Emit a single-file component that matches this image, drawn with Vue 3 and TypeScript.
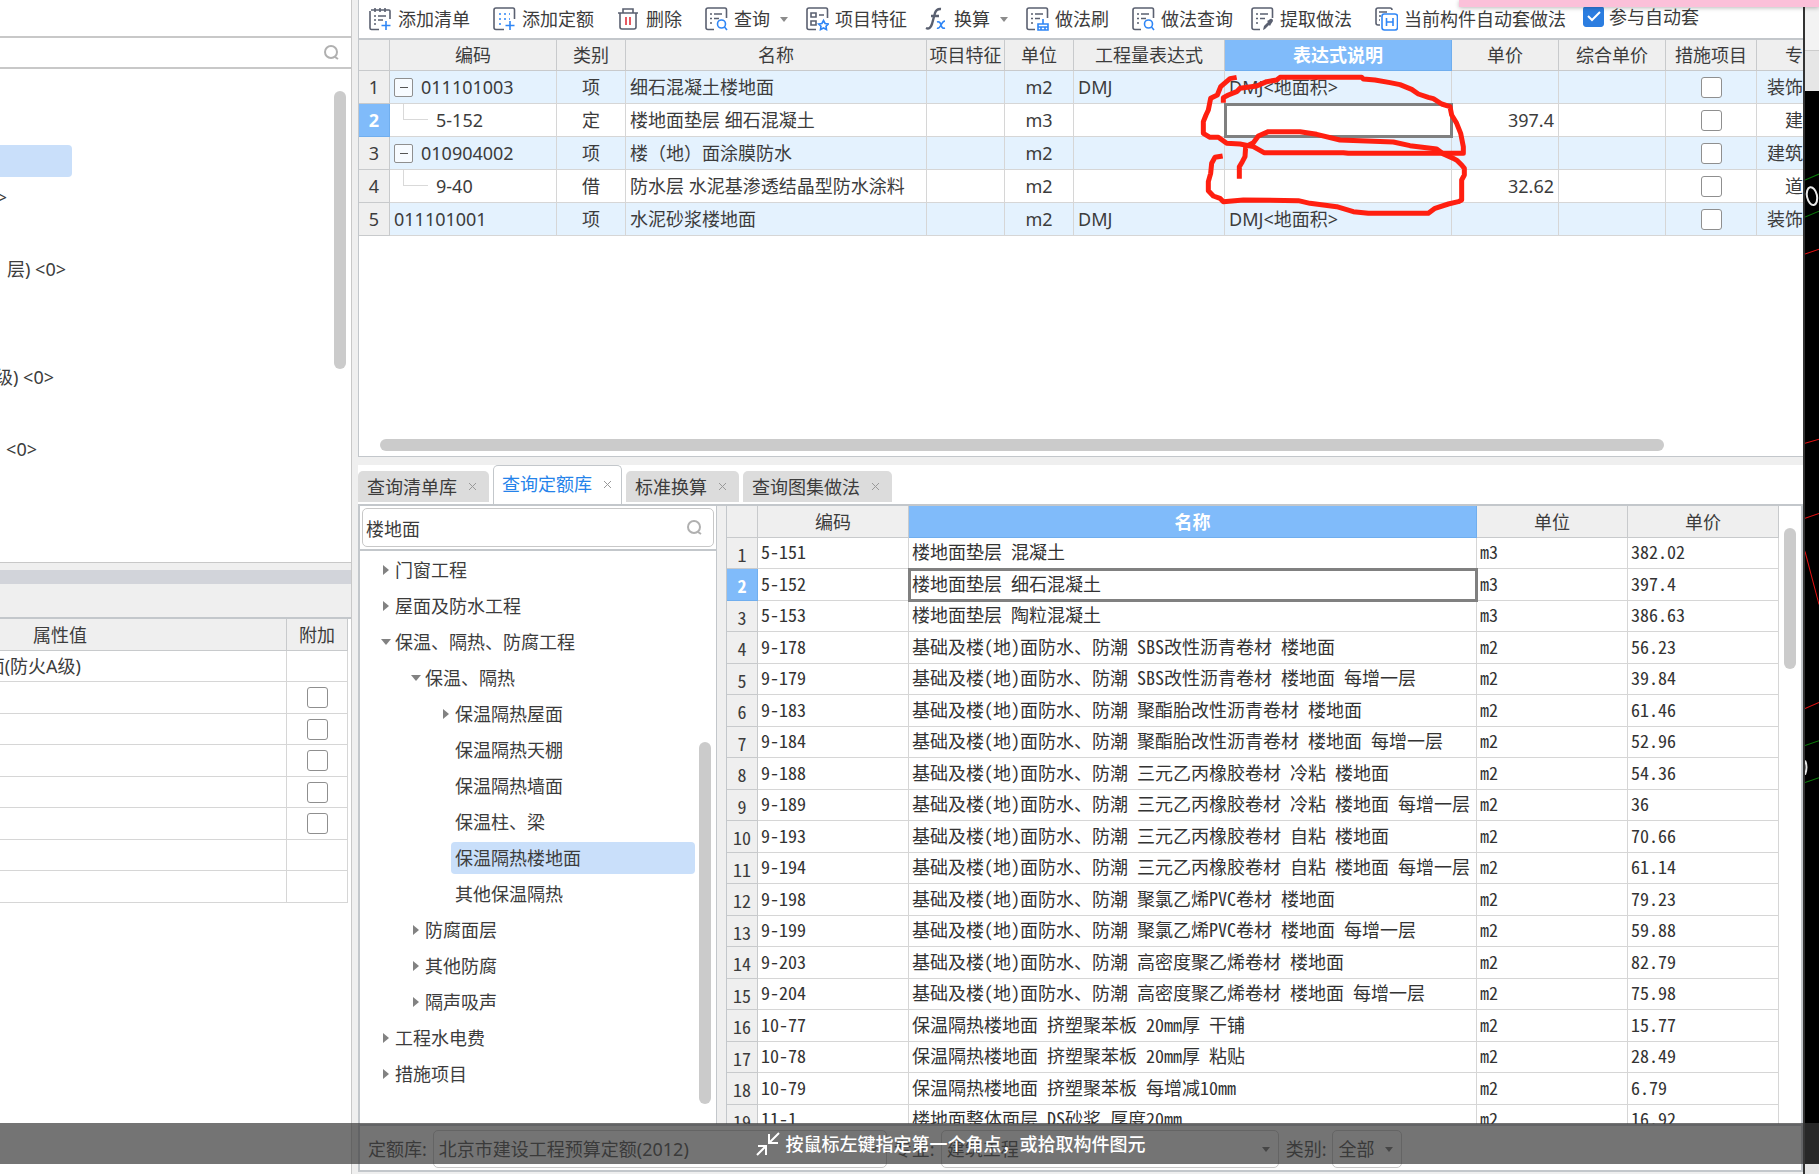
<script setup lang="ts">
import { ref } from 'vue'

interface Tool { id: string; label: string; menu?: boolean; tight?: boolean }
interface Item { code: string; kind: string; name: string; unit: string; expr: string; note: string; price: string; major: string; level: 'parent' | 'child' | 'flat' }
interface TreeNode { label: string; level: number; state: 'open' | 'closed' | 'leaf' }

const tools: Tool[] = [
  { id: 'list', label: '添加清单' },
  { id: 'quota', label: '添加定额' },
  { id: 'trash', label: '删除' },
  { id: 'query', label: '查询', menu: true, tight: true },
  { id: 'feature', label: '项目特征', tight: true },
  { id: 'fx', label: '换算', menu: true, tight: true },
  { id: 'brush', label: '做法刷' },
  { id: 'search', label: '做法查询', tight: true },
  { id: 'pick', label: '提取做法' },
  { id: 'auto', label: '当前构件自动套做法', tight: true },
]
const autoApply = ref(true)

const items: Item[] = [
  { code: '011101003', kind: '项', name: '细石混凝土楼地面', unit: 'm2', expr: 'DMJ', note: 'DMJ<地面积>', price: '', major: '装饰', level: 'parent' },
  { code: '5-152', kind: '定', name: '楼地面垫层 细石混凝土', unit: 'm3', expr: '', note: '', price: '397.4', major: '建', level: 'child' },
  { code: '010904002', kind: '项', name: '楼（地）面涂膜防水', unit: 'm2', expr: '', note: '', price: '', major: '建筑', level: 'parent' },
  { code: '9-40', kind: '借', name: '防水层 水泥基渗透结晶型防水涂料', unit: 'm2', expr: '', note: '', price: '32.62', major: '道', level: 'child' },
  { code: '011101001', kind: '项', name: '水泥砂浆楼地面', unit: 'm2', expr: 'DMJ', note: 'DMJ<地面积>', price: '', major: '装饰', level: 'flat' },
]

const tabs = ['查询清单库', '查询定额库', '标准换算', '查询图集做法']
const activeTab = ref(1)
const keyword = ref('楼地面')

const tree: TreeNode[] = [
  { label: '门窗工程', level: 0, state: 'closed' },
  { label: '屋面及防水工程', level: 0, state: 'closed' },
  { label: '保温、隔热、防腐工程', level: 0, state: 'open' },
  { label: '保温、隔热', level: 1, state: 'open' },
  { label: '保温隔热屋面', level: 2, state: 'closed' },
  { label: '保温隔热天棚', level: 2, state: 'leaf' },
  { label: '保温隔热墙面', level: 2, state: 'leaf' },
  { label: '保温柱、梁', level: 2, state: 'leaf' },
  { label: '保温隔热楼地面', level: 2, state: 'leaf' },
  { label: '其他保温隔热', level: 2, state: 'leaf' },
  { label: '防腐面层', level: 1, state: 'closed' },
  { label: '其他防腐', level: 1, state: 'closed' },
  { label: '隔声吸声', level: 1, state: 'closed' },
  { label: '工程水电费', level: 0, state: 'closed' },
  { label: '措施项目', level: 0, state: 'closed' },
]
const activeNode = ref(8)

const base = '基础及楼(地)面防水、防潮 '
const quotas: string[][] = [
  ['5-151', '楼地面垫层 混凝土', 'm3', '382.02'],
  ['5-152', '楼地面垫层 细石混凝土', 'm3', '397.4'],
  ['5-153', '楼地面垫层 陶粒混凝土', 'm3', '386.63'],
  ['9-178', base + 'SBS改性沥青卷材 楼地面', 'm2', '56.23'],
  ['9-179', base + 'SBS改性沥青卷材 楼地面 每增一层', 'm2', '39.84'],
  ['9-183', base + '聚酯胎改性沥青卷材 楼地面', 'm2', '61.46'],
  ['9-184', base + '聚酯胎改性沥青卷材 楼地面 每增一层', 'm2', '52.96'],
  ['9-188', base + '三元乙丙橡胶卷材 冷粘 楼地面', 'm2', '54.36'],
  ['9-189', base + '三元乙丙橡胶卷材 冷粘 楼地面 每增一层', 'm2', '36'],
  ['9-193', base + '三元乙丙橡胶卷材 自粘 楼地面', 'm2', '70.66'],
  ['9-194', base + '三元乙丙橡胶卷材 自粘 楼地面 每增一层', 'm2', '61.14'],
  ['9-198', base + '聚氯乙烯PVC卷材 楼地面', 'm2', '79.23'],
  ['9-199', base + '聚氯乙烯PVC卷材 楼地面 每增一层', 'm2', '59.88'],
  ['9-203', base + '高密度聚乙烯卷材 楼地面', 'm2', '82.79'],
  ['9-204', base + '高密度聚乙烯卷材 楼地面 每增一层', 'm2', '75.98'],
  ['10-77', '保温隔热楼地面 挤塑聚苯板 20mm厚 干铺', 'm2', '15.77'],
  ['10-78', '保温隔热楼地面 挤塑聚苯板 20mm厚 粘贴', 'm2', '28.49'],
  ['10-79', '保温隔热楼地面 挤塑聚苯板 每增减10mm', 'm2', '6.79'],
  ['11-1', '楼地面整体面层 DS砂浆 厚度20mm', 'm2', '16.92'],
]

const components = [
  { text: '', end: 72 },
  { text: '0>', end: 7 },
  { text: '', end: 0 },
  { text: '层) <0>', end: 66 },
  { text: '', end: 0 },
  { text: '', end: 0 },
  { text: '级) <0>', end: 54 },
  { text: '', end: 0 },
  { text: '<0>', end: 37 },
]
const props = ['text', 'box', 'box', 'box', 'box', 'box', 'none', 'none']
</script>

<template>
  <div class="app">
    <aside class="left">
      <div class="left-top"></div>
      <label class="left-search">
        <input type="text" aria-label="搜索构件" />
        <svg class="glass" viewBox="0 0 18 18"><circle cx="8" cy="8" r="6" /><path d="M12 13l3 2" /></svg>
      </label>
      <div class="left-list">
        <ul>
          <li v-for="(c, i) in components" :key="i" :class="{ on: i === 0 }">
            <span class="cut" :style="{ width: c.end + 'px' }">{{ c.text }}</span>
          </li>
        </ul>
        <i class="thumb"></i>
      </div>
      <div class="bar"></div>
      <div class="subbar"></div>
      <div class="props">
        <table>
          <colgroup><col /><col class="p-add" /></colgroup>
          <thead><tr><th class="p-val">属性值</th><th>附加</th></tr></thead>
          <tbody>
            <tr v-for="(p, i) in props" :key="i">
              <td><span v-if="p === 'text'" class="cut p-cut">面(防火A级)</span></td>
              <td class="mid"><input v-if="p === 'box'" type="checkbox" aria-label="附加" /></td>
            </tr>
          </tbody>
        </table>
      </div>
    </aside>

    <main>
      <section class="upper">
        <nav class="tools">
          <button v-for="t in tools" :key="t.id" type="button" :class="{ tight: t.tight }">
            <svg class="ico" viewBox="0 0 24 24">
              <g v-if="t.id === 'list'">
                <path d="M3 3h18q1 0 1 1v8M2 4v17q0 1.500 1.500 1.500H11M7 1v4M12 1v4M17 1v4M6 9h2M10 9h8M6 13h2M10 13h5M6 17h2" /><path class="b" d="M18 14v9M13.500 18.500h9" />
              </g>
              <g v-else-if="t.id === 'quota'">
                <path d="M12 22.500H4q-2 0-2-2V3q0-2 2-2h17q1.500 0 1.500 2v9" /><path class="b dots" d="M7 7h11M7 12h11M7 17h5" /><path class="b" d="M18 14v9M13.500 18.500h9" />
              </g>
              <g v-else-if="t.id === 'trash'">
                <path d="M2 6h20M7 6V2h10v4M4 6v14q0 2 2 2h12q2 0 2-2V6" /><path class="r" d="M10 10v8M14 10v8" />
              </g>
              <g v-else-if="t.id === 'feature'">
                <path d="M11 22.500H4q-2 0-2-2V3q0-2 2-2h17q1.500 0 1.500 2v8M6 6h5v4H6zM14 8h5M6 14h5v4H6z" /><path class="b" d="M18.500 13.500l1.600 3 3.200.5-2.300 2.200.5 3.300-3-1.500-3 1.500.5-3.300-2.300-2.200 3.200-.5z" />
              </g>
              <g v-else-if="t.id === 'fx'">
                <path class="f" d="M2 21q4 2 6-4l3-11q1.500-4.500 6-4M7 9h8" /><path class="b" d="M13 15q3-1 4 3t4 3M21 14q-2 0-4 4t-4 3" />
              </g>
              <g v-else-if="t.id === 'auto'">
                <path d="M6 18H4q-2 0-2-2V3q0-2 2-2h12q2 0 2 2M5 5h8M5 9h2M5 13h1" /><path class="b" d="M10 7h11q2.500 0 2.500 2.500v11q0 2.500-2.500 2.500H10.500Q8 23 8 20.500v-11Q8 7 10 7zM12.500 11v8M19 11v8M12.500 15h6.500" />
              </g>
              <g v-else>
                <path d="M10 22.500H4q-2 0-2-2V3q0-2 2-2h17q1.500 0 1.500 2v8M6 7h2M10 7h8M6 11.500h2M10 11.500h5M6 16h2" />
                <path v-if="t.id === 'brush'" class="b" d="M18 12v5M13 23v-6h10v6zM13 20h10M16 20v3M20 20v3" />
                <path v-else-if="t.id === 'pick'" class="fill" d="M13 23l1-4 4-4-1-1 2-1 1-1q3-1 3 2l-2 3-1 2-1-1-4 4z" />
                <g v-else><circle class="b" cx="17.500" cy="17" r="4" /><path class="b" d="M20.500 20l2.500 3" /></g>
              </g>
            </svg>
            <span>{{ t.label }}</span>
            <svg v-if="t.menu" class="caret" viewBox="0 0 8 6"><path d="M0 1h8L4 6z" /></svg>
          </button>
          <label class="apply"><input v-model="autoApply" type="checkbox" />参与自动套</label>
        </nav>

        <div class="grid-wrap">
          <table class="grid">
            <colgroup>
              <col class="c31" /><col class="c167" /><col class="c69" /><col class="c301" /><col class="c78" /><col class="c69" />
              <col class="c151" /><col class="c227" /><col class="c107" /><col class="c107" /><col class="c91" /><col class="c46" />
            </colgroup>
            <thead>
              <tr>
                <th></th><th>编码</th><th>类别</th><th>名称</th><th>项目特征</th><th>单位</th><th>工程量表达式</th>
                <th class="sel">表达式说明</th><th>单价</th><th>综合单价</th><th>措施项目</th><th class="end">专</th>
              </tr>
            </thead>
            <tbody>
              <tr v-for="(r, i) in items" :key="i" :class="{ blue: r.level !== 'child' }">
                <th :class="{ sel: i === 1 }">{{ i + 1 }}</th>
                <td>
                  <span class="code" :class="r.level">
                    <button v-if="r.level === 'parent'" type="button" class="minus" aria-label="收起"></button>
                    <i v-if="r.level === 'child'" class="elbow"></i>{{ r.code }}
                  </span>
                </td>
                <td class="mid">{{ r.kind }}</td>
                <td>{{ r.name }}</td>
                <td></td>
                <td class="mid">{{ r.unit }}</td>
                <td>{{ r.expr }}</td>
                <td :class="{ cursor: i === 1 }">{{ r.note }}</td>
                <td class="num">{{ r.price }}</td>
                <td></td>
                <td class="mid"><input type="checkbox" aria-label="措施项目" /></td>
                <td class="end">{{ r.major }}</td>
              </tr>
            </tbody>
          </table>
          <svg class="marks" viewBox="1080 210 810 450">
            <path d="M1190 232L1170 236 1142 260 1132 285 1112 295 1105 330 1098 345 1090 365V400L1110 412H1135L1160 430 1200 432 1240 440 1272 458H1510L1525 460H1870V440L1862 400 1850 370 1835 345 1830 320 1805 312 1780 296 1765 292 1735 282 1715 268 1680 254 1650 248 1605 240 1570 237 1565 232H1320L1310 240 1280 245 1250 258 1200 265 1190 275 1165 285 1150 293V308" />
            <path d="M1198 536V500L1207 485 1215 470 1217 440 1240 428 1255 408 1285 395H1380L1430 403 1500 420 1660 426 1710 437 1790 447 1810 462 1840 475 1852 482 1865 495 1873 505V525L1865 540V600L1855 605 1825 612 1785 625 1765 640H1585L1540 635 1490 620 1410 610 1375 602 1210 600 1150 605 1140 595 1120 588 1105 572V545L1112 520 1115 490 1125 472 1148 468" />
          </svg>
          <i class="thumb-h"></i>
        </div>
      </section>

      <div class="tabs" role="tablist">
        <button v-for="(t, i) in tabs" :key="t" type="button" role="tab" :class="{ on: i === activeTab }" @click="activeTab = i">
          {{ t }}<svg viewBox="0 0 9 9"><path d="M1 1l7 7M8 1l-7 7" /></svg>
        </button>
      </div>

      <section class="query">
        <div class="cols">
          <div class="finder">
            <label class="find">
              <input v-model="keyword" type="text" aria-label="搜索定额" />
              <svg class="glass" viewBox="0 0 18 18"><circle cx="8" cy="8" r="6" /><path d="M12 13l3 2" /></svg>
            </label>
            <ul class="tree">
              <li v-for="(n, i) in tree" :key="n.label" :class="'l' + n.level">
                <svg viewBox="0 0 10 10">
                  <path v-if="n.state === 'closed'" d="M2 0l6 5-6 5z" /><path v-else-if="n.state === 'open'" d="M0 2h10L5 8z" />
                </svg>
                <button type="button" :class="{ on: i === activeNode }" @click="activeNode = i">{{ n.label }}</button>
              </li>
            </ul>
            <i class="thumb"></i>
          </div>
          <div class="result">
            <table class="song">
              <colgroup><col class="c31" /><col class="c151" /><col /><col class="c151" /><col class="c151" /></colgroup>
              <thead><tr><th></th><th>编码</th><th class="sel">名称</th><th>单位</th><th>单价</th></tr></thead>
              <tbody>
                <tr v-for="(q, i) in quotas" :key="i">
                  <th :class="{ sel: i === 1 }">{{ i + 1 }}</th>
                  <td v-for="(cell, j) in q" :key="j" :class="{ cursor: i === 1 && j === 1 }">{{ cell }}</td>
                </tr>
              </tbody>
            </table>
            <div class="gutter"><i class="thumb"></i></div>
          </div>
        </div>
        <form class="filters">
          <label for="lib">定额库:</label>
          <select id="lib" class="s-lib"><option>北京市建设工程预算定额(2012)</option></select>
          <label for="major">专业:</label>
          <select id="major" class="s-major"><option>建筑工程</option></select>
          <label for="kind">类别:</label>
          <select id="kind" class="s-kind"><option>全部</option></select>
        </form>
      </section>
    </main>

    <div class="cad">
      <div class="cad-top"></div>
      <div class="cad-mid"></div>
      <svg class="canvas" viewBox="0 91 14 1072" preserveAspectRatio="xMinYMin slice">
        <g class="green"><path d="M0 180L14 174M0 217L14 211M0 745L14 740M0 782L14 777" /></g>
        <g class="red"><path d="M0 254L14 249M0 443L14 439M0 518L14 513M0 551L14 604M0 708L14 702" /></g>
        <g class="white"><ellipse cx="7" cy="196" rx="5" ry="9" transform="rotate(-12 7 196)" /><path d="M0 760q3 6 0 14" /></g>
      </svg>
      <div class="cad-foot"></div>
    </div>

    <div class="pink"></div>
    <div class="prompt">
      <svg viewBox="0 0 24 24"><path d="M23 1L13 11M13 2v9h9M1 23l9-9M2 14h8v9" /></svg>
      <span>按鼠标左键指定第一个角点，或拾取构件图元</span>
    </div>
  </div>
</template>

<style>
body { margin: 0; background: #efefef; }
</style>

<style scoped>
.app, .app * { box-sizing: border-box; }
.app {
  position: relative; display: flex; height: 100vh; overflow: hidden; background: #efefef; color: #3c3c3c;
  font: 18px/24px "Noto Sans", "Noto Sans CJK SC", sans-serif;
}
button, input, select { font: inherit; color: inherit; }
button { border: 0; background: none; padding: 0; }
ul { list-style: none; margin: 0; padding: 0; }
table { border-collapse: separate; border-spacing: 0; table-layout: fixed; }
th { font-weight: 400; background: #efefef; border: solid #c8cacc; border-width: 0 1px 1px 0; padding: 0; }
td { border: solid #d6d6d6; border-width: 0 1px 1px 0; padding: 0 4px; white-space: nowrap; overflow: hidden; }
input[type='checkbox'] {
  appearance: none; display: block; width: 21px; height: 21px; margin: 0 auto; border: 1px solid #8f8f8f; border-radius: 3px; background: #fff;
}
.mid { text-align: center; }
.sel { background: #80bbfa; border-color: #70aeee; color: #fff; font-weight: 700; }
.cursor { outline: 3px solid #808080; outline-offset: -2px; }
.thumb { position: absolute; width: 12px; border-radius: 6px; background: #cbcbcb; }
.glass { width: 18px; height: 18px; fill: none; stroke: #b0b0b0; stroke-width: 2; }

.left { display: flex; flex-direction: column; width: 352px; flex: none; border-right: 1px solid #c8c8c8; background: #fff; }
.left-top { height: 38px; border-bottom: 2px solid #c8c8c8; flex: none; }
.left-search { display: flex; align-items: center; height: 31px; border-bottom: 2px solid #c8c8c8; flex: none; padding-right: 10px; }
.left-search input { flex: 1; min-width: 0; border: 0; outline: 0; background: none; }
.left-list { position: relative; height: 494px; flex: none; border-bottom: 1px solid #c8c8c8; padding-top: 74px; }
.left-list li { height: 36px; display: flex; align-items: center; }
.left-list .on .cut { height: 32px; background: #c9dffa; border-radius: 0 4px 4px 0; }
.left-list .thumb { right: 5px; top: 22px; height: 278px; }
.cut { display: flex; justify-content: flex-end; overflow: hidden; white-space: pre; }
.p-cut { width: 81px; }
.bar { height: 21px; flex: none; background: #d2d4da; border-top: 7px solid #efefef; }
.subbar { height: 35px; flex: none; background: #efefef; border-bottom: 2px solid #c3c7cb; }
.props { flex: 1; overflow: hidden; }
.props table { width: 348px; }
.props td { padding: 0; }
.p-add { width: 61px; }
.props th { height: 32px; }
.p-val { text-align: left; padding-left: 33px; }
.props tbody tr { height: 31px; }
.props tbody tr:nth-child(even) { height: 32px; }

main { flex: 1; min-width: 0; display: flex; flex-direction: column; padding: 0 0 2px 6px; }
.upper { height: 457px; flex: none; display: flex; flex-direction: column; background: #fff; border: solid #c3c7cb; border-width: 0 0 1px 1px; margin-bottom: 8px; overflow: hidden; }
.tools { display: flex; align-items: center; height: 40px; flex: none; border-bottom: 2px solid #c3c7cb; padding: 0 0 0 9px; }
.tools button { display: flex; align-items: center; flex: none; margin-right: 22px; white-space: nowrap; }
.tools button.tight { margin-right: 17px; }
.ico { width: 24px; height: 24px; margin-right: 6px; fill: none; stroke: #5a6070; stroke-width: 1.6; }
.ico .b { stroke: #2f86f6; }
.ico .r { stroke: #e0303a; }
.ico .f { stroke-width: 2.4; }
.ico .dots { stroke-dasharray: 2 3; }
.ico .fill { fill: #5a6070; stroke: none; }
.caret { width: 8px; height: 6px; margin-left: 10px; fill: #8c8c8c; }
.apply { display: flex; align-items: center; gap: 5px; white-space: nowrap; padding-bottom: 5px; }
.apply input:checked {
  border-color: #2b7de0; background: #2b7de0 url("data:image/svg+xml,%3Csvg xmlns='http://www.w3.org/2000/svg' viewBox='0 0 19 19'%3E%3Cpath d='M4 9l4 4 8-8' fill='none' stroke='white' stroke-width='2'/%3E%3C/svg%3E");
}

.grid-wrap { position: relative; flex: 1; overflow: hidden; }
.grid { width: 1444px; }
.grid tr { height: 33px; }
.grid thead tr { height: 31px; }
.c31 { width: 31px; } .c46 { width: 46px; } .c69 { width: 69px; } .c78 { width: 78px; } .c91 { width: 91px; }
.c107 { width: 107px; } .c151 { width: 151px; } .c167 { width: 167px; } .c227 { width: 227px; } .c301 { width: 301px; }
.blue td { background: #e4f2fe; }
.num { text-align: right; }
.end { text-align: right; padding: 0; border-right: 0; }
.code { position: relative; display: flex; align-items: center; height: 32px; }
.code.child { padding-left: 42px; }
.minus { position: relative; width: 19px; height: 19px; margin-right: 8px; border: 1px solid #8f8f8f; border-radius: 2px; background: #f7fbff; }
.minus::after { content: ""; position: absolute; left: 5px; right: 4px; top: 8px; height: 1px; background: #555; }
.elbow { position: absolute; left: 9px; top: 0; width: 25px; height: 16px; border: solid #d9d9d9; border-width: 0 0 1px 1px; }
.marks { position: absolute; left: 841px; top: 30px; width: 270px; height: 150px; fill: none; stroke: #ff1f10; stroke-width: 15; stroke-linejoin: round; }
.thumb-h { position: absolute; left: 21px; right: 139px; bottom: 5px; height: 12px; border-radius: 6px; background: #cbcbcb; }

.tabs { display: flex; align-items: flex-end; height: 39px; flex: none; background: #fff; }
.tabs button { display: flex; align-items: center; gap: 11px; height: 31px; margin: 0 4px 2px 0; padding: 0 12px 0 9px; background: #dcdcdc; border-radius: 5px 5px 0 0; white-space: nowrap; }
.tabs button.on { height: 39px; margin-bottom: 0; padding: 0 9px 2px 8px; background: #fff; border: 1px solid #c3c7cb; border-bottom: 0; color: #2583ea; }
.tabs svg { width: 9px; height: 9px; fill: none; stroke: #999; }

.query { flex: 1; min-height: 0; display: flex; flex-direction: column; background: #fff; border: 2px solid #c3c7cb; }
.cols { flex: 1; min-height: 0; display: flex; }
.finder { position: relative; width: 357px; flex: none; border-right: 1px solid #c3c7cb; overflow: hidden; }
.find { position: relative; display: block; height: 45px; padding: 2px; border-bottom: 2px solid #c3c7cb; }
.find input { display: block; width: 352px; height: 39px; border: 1px solid #c8c8c8; border-radius: 5px; outline: 0; padding: 0 3px; background: #fff; }
.find .glass { position: absolute; right: 12px; top: 13px; }
.tree { padding: 1px 21px 0 21px; }
.tree li { display: flex; align-items: center; height: 36px; }
.tree .l1 { padding-left: 30px; }
.tree .l2 { padding-left: 60px; }
.tree svg { width: 10px; height: 10px; flex: none; fill: #828282; }
.tree button { flex: 1; height: 32px; padding: 0 4px; text-align: left; border-radius: 4px; white-space: nowrap; }
.tree .on { background: #c9dffa; }
.finder .thumb { right: 5px; top: 236px; height: 362px; }
.result { flex: 1; min-width: 0; display: flex; overflow: hidden; border-left: 9px solid #efefef; }
.song { flex: 1; min-width: 0; height: max-content; border-left: 1px solid #c3c7cb; }
.song thead tr { height: 32px; }
.song tbody tr { height: 31px; }
.song tbody tr:nth-child(even) { height: 32px; }
.song td { padding: 0 2px 4px 3px; color: #333; }
.song tbody { font-family: "Noto Sans CJK SC", sans-serif; font-feature-settings: "hwid"; }
.song tbody th { padding-top: 1px; line-height: 20px; }
.gutter { position: relative; width: 22px; flex: none; }
.gutter .thumb { left: 5px; top: 22px; height: 141px; }
.filters { display: flex; align-items: center; height: 46px; flex: none; border-top: 2px solid #c3c7cb; padding: 2px 0 0 8px; }
.filters label { margin-right: 6px; white-space: nowrap; }
.filters select {
  appearance: none; height: 38px; margin-right: 7px; padding: 0 5px; border: 1px solid #c8c8c8; border-radius: 5px;
  background: #fff url("data:image/svg+xml,%3Csvg xmlns='http://www.w3.org/2000/svg' viewBox='0 0 8 6'%3E%3Cpath d='M0 1h8L4 6z' fill='%23666'/%3E%3C/svg%3E") no-repeat right 8px center / 8px 6px;
}
.s-lib { width: 454px; }
.s-major { width: 338px; }
.s-kind { width: 70px; }

.cad { width: 16px; flex: none; display: flex; flex-direction: column; border-left: 2px solid #333; background: #000; }
.cad-top { height: 51px; flex: none; background: #f3f3f3; border-bottom: 1px solid #ccc; }
.cad-mid { height: 40px; flex: none; background: #e6e6e6; }
.canvas { flex: 1; min-height: 0; width: 14px; fill: none; }
.green { stroke: #0a7a0a; }
.red { stroke: #e01010; }
.white { stroke: #e8e8e8; stroke-width: 2; }
.cad-foot { height: 10px; flex: none; background: #e6e6e6; }
.pink { position: absolute; top: 0; right: 0; width: 360px; height: 7px; background: #fbc0d9; box-shadow: 0 1px 4px #0004; }
.prompt { position: absolute; left: 0; right: 0; bottom: 10px; height: 41px; display: flex; align-items: center; justify-content: center; gap: 6px; background: #393939b3; color: #fff; font-weight: 500; }
.prompt svg { width: 24px; height: 24px; fill: none; stroke: #fff; stroke-width: 2; margin-left: 82px; }
</style>
